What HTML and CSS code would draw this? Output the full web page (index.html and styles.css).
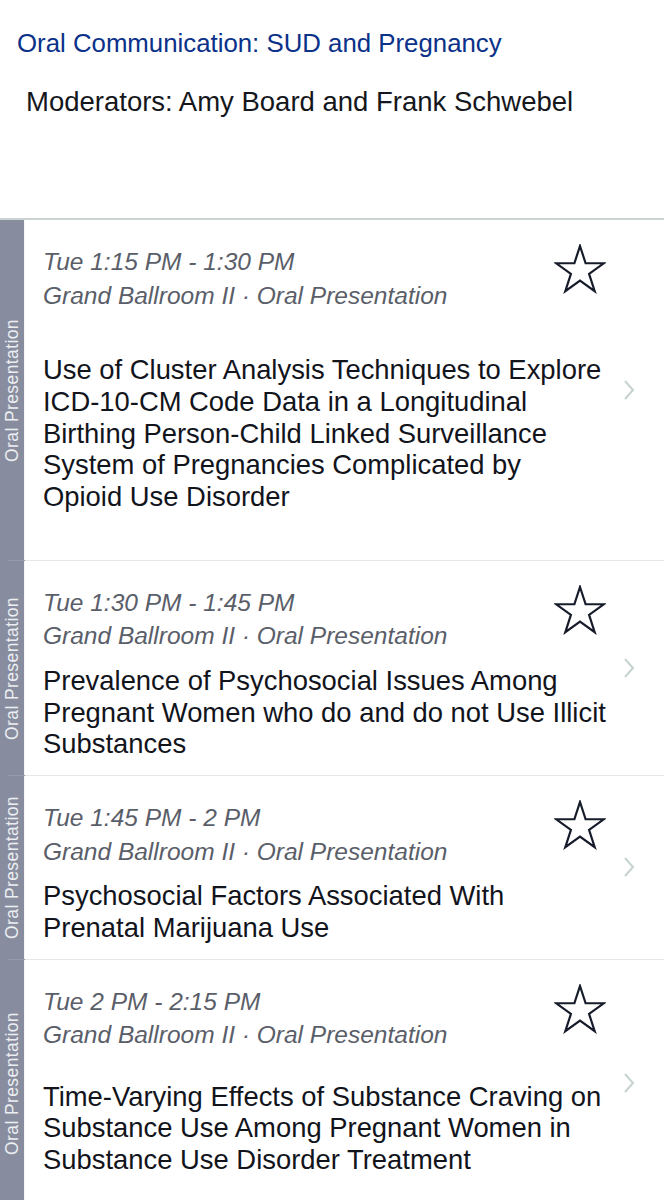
FILE: index.html
```html
<!DOCTYPE html>
<html lang="en">
<head>
<meta charset="utf-8">
<title>Oral Communication: SUD and Pregnancy</title>
<link rel="stylesheet" href="styles.css">
</head>
<body>
<header class="head">
  <h1 class="track">Oral Communication: SUD and Pregnancy</h1>
  <p class="mods">Moderators: Amy Board and Frank Schwebel</p>
</header>
<ul class="list">
  <li class="item item-long">
    <div class="side"><span class="side-label">Oral Presentation</span></div>
    <div class="body">
      <div class="top">
        <div class="meta">
          <div class="time">Tue 1:15 PM - 1:30 PM</div>
          <div class="loc">Grand Ballroom II · Oral Presentation</div>
        </div>
        <svg class="star" width="52" height="50" viewBox="-1 -1 52 50" aria-hidden="true"><polygon points="25,1 30.61,18.27 48.78,18.27 34.08,28.95 39.69,46.23 25,35.55 10.31,46.23 15.92,28.95 1.22,18.27 19.39,18.27"/></svg>
      </div>
      <div class="title title-xl">Use of Cluster Analysis Techniques to Explore<br>ICD-10-CM Code Data in a Longitudinal<br>Birthing Person-Child Linked Surveillance<br>System of Pregnancies Complicated by<br>Opioid Use Disorder</div>
    </div>
    <div class="chev"><svg width="12" height="22" viewBox="0 0 12 22" aria-hidden="true"><path d="M2 2 L10 11 L2 20"/></svg></div>
  </li>
  <li class="item">
    <div class="side"><span class="side-label">Oral Presentation</span></div>
    <div class="body">
      <div class="top">
        <div class="meta">
          <div class="time">Tue 1:30 PM - 1:45 PM</div>
          <div class="loc">Grand Ballroom II · Oral Presentation</div>
        </div>
        <svg class="star" width="52" height="50" viewBox="-1 -1 52 50" aria-hidden="true"><polygon points="25,1 30.61,18.27 48.78,18.27 34.08,28.95 39.69,46.23 25,35.55 10.31,46.23 15.92,28.95 1.22,18.27 19.39,18.27"/></svg>
      </div>
      <div class="title">Prevalence of Psychosocial Issues Among<br>Pregnant Women who do and do not Use Illicit<br>Substances</div>
    </div>
    <div class="chev"><svg width="12" height="22" viewBox="0 0 12 22" aria-hidden="true"><path d="M2 2 L10 11 L2 20"/></svg></div>
  </li>
  <li class="item">
    <div class="side"><span class="side-label">Oral Presentation</span></div>
    <div class="body">
      <div class="top">
        <div class="meta">
          <div class="time">Tue 1:45 PM - 2 PM</div>
          <div class="loc">Grand Ballroom II · Oral Presentation</div>
        </div>
        <svg class="star" width="52" height="50" viewBox="-1 -1 52 50" aria-hidden="true"><polygon points="25,1 30.61,18.27 48.78,18.27 34.08,28.95 39.69,46.23 25,35.55 10.31,46.23 15.92,28.95 1.22,18.27 19.39,18.27"/></svg>
      </div>
      <div class="title">Psychosocial Factors Associated With<br>Prenatal Marijuana Use</div>
    </div>
    <div class="chev"><svg width="12" height="22" viewBox="0 0 12 22" aria-hidden="true"><path d="M2 2 L10 11 L2 20"/></svg></div>
  </li>
  <li class="item item-last">
    <div class="side"><span class="side-label">Oral Presentation</span></div>
    <div class="body">
      <div class="top">
        <div class="meta">
          <div class="time">Tue 2 PM - 2:15 PM</div>
          <div class="loc">Grand Ballroom II · Oral Presentation</div>
        </div>
        <svg class="star" width="52" height="50" viewBox="-1 -1 52 50" aria-hidden="true"><polygon points="25,1 30.61,18.27 48.78,18.27 34.08,28.95 39.69,46.23 25,35.55 10.31,46.23 15.92,28.95 1.22,18.27 19.39,18.27"/></svg>
      </div>
      <div class="title title-lg">Time-Varying Effects of Substance Craving on<br>Substance Use Among Pregnant Women in<br>Substance Use Disorder Treatment</div>
    </div>
    <div class="chev"><svg width="12" height="22" viewBox="0 0 12 22" aria-hidden="true"><path d="M2 2 L10 11 L2 20"/></svg></div>
  </li>
</ul>
</body>
</html>
```
FILE: styles.css
```css
* { box-sizing: border-box; }
html, body {
  margin: 0;
  padding: 0;
  background: #ffffff;
  font-family: "Liberation Sans", Arial, Helvetica, sans-serif;
}
.head {
  height: 220px;
  padding-top: 28px;
  border-bottom: 2px solid #cbd2d2;
}
.track {
  margin: 0 0 0 17px;
  font-size: 25.8px;
  font-weight: 400;
  line-height: 30px;
  color: #0b3189;
}
.mods {
  margin: 28px 0 0 26px;
  font-size: 27.5px;
  line-height: 32px;
  color: #15171c;
}
.list {
  list-style: none;
  margin: 0;
  padding: 0;
}
.item {
  position: relative;
  display: grid;
  grid-template-columns: 25px 1fr 51px;
  padding-bottom: 1px;
}
.item::after {
  content: "";
  position: absolute;
  left: 8px;
  right: 0;
  bottom: 0;
  height: 1px;
  background: linear-gradient(to right, #959aa9 0, #959aa9 17px, #e4e7e7 17px);
}
.side {
  background: #878d9e;
  border-right: 1px solid #f4f5f7;
  margin-bottom: -1px;
  display: flex;
  align-items: center;
  justify-content: center;
}
.side-label {
  writing-mode: vertical-rl;
  transform: rotate(180deg);
  font-size: 17.5px;
  letter-spacing: 0.4px;
  color: #eceef2;
  white-space: nowrap;
}
.body {
  padding: 25px 0 15px 18px;
}
.item-long .body { padding-bottom: 47px; }
.item-last .body { padding-bottom: 30px; }
.top {
  display: flex;
  justify-content: space-between;
  align-items: flex-start;
}
.meta {
  font-style: italic;
  font-size: 24.5px;
  line-height: 33.5px;
  color: #5a5e69;
}
.star {
  margin: -1px 7px 0 0;
  fill: none;
  stroke: #171c2b;
  stroke-width: 2.2;
  stroke-linejoin: miter;
}
.title {
  margin-top: 12px;
  font-size: 27.4px;
  line-height: 31.75px;
  color: #12141c;
  white-space: nowrap;
}
.title-xl { margin-top: 42px; }
.title-lg { margin-top: 29px; }
.chev {
  display: flex;
  align-items: center;
  padding-left: 10px;
}
.chev path {
  fill: none;
  stroke: #c6d3cd;
  stroke-width: 2;
}
```
